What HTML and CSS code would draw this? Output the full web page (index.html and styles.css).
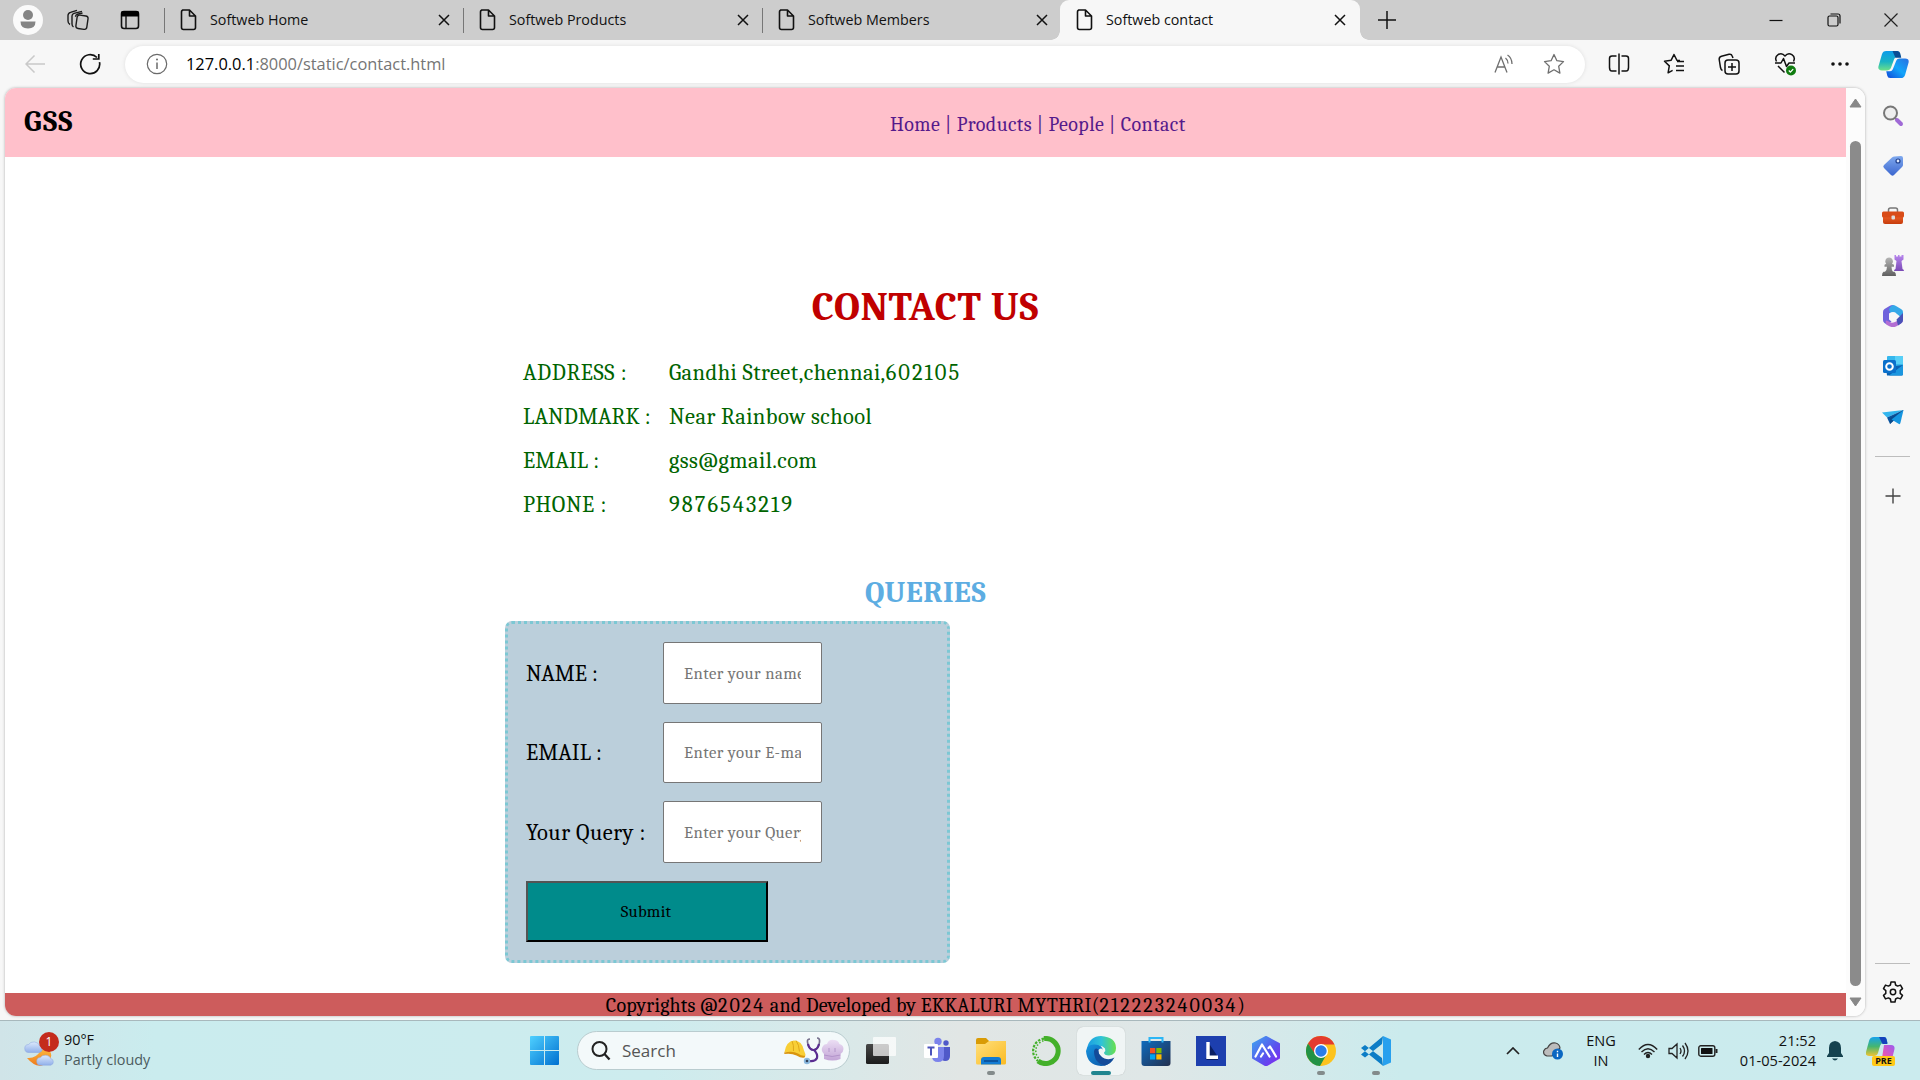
FILE: index.html
```html
<!DOCTYPE html>
<html lang="en">
<head>
<meta charset="utf-8">
<title>Softweb contact</title>
<link rel="stylesheet" href="styles.css">
</head>
<body>
<svg class="defs" width="0" height="0" aria-hidden="true">
  <defs>
    <linearGradient id="gBlue" x1="0" y1="0" x2="1" y2="1"><stop offset="0" stop-color="#4fd0ff"/><stop offset="1" stop-color="#0070d0"/></linearGradient>
    <linearGradient id="gTag" x1="0" y1="0" x2="0" y2="1"><stop offset="0" stop-color="#7fa9ee"/><stop offset="1" stop-color="#3b66cf"/></linearGradient>
    <linearGradient id="gOrange" x1="0" y1="0" x2="0" y2="1"><stop offset="0" stop-color="#f0642a"/><stop offset="1" stop-color="#c63c0c"/></linearGradient>
    <linearGradient id="gGrey" x1="0" y1="0" x2="0" y2="1"><stop offset="0" stop-color="#b5b5b5"/><stop offset="1" stop-color="#606060"/></linearGradient>
    <linearGradient id="gPurple" x1="0" y1="0" x2="0" y2="1"><stop offset="0" stop-color="#b886ee"/><stop offset="1" stop-color="#7a4ab5"/></linearGradient>
    <linearGradient id="gTeal" x1="0" y1="0" x2="0" y2="1"><stop offset="0" stop-color="#0c9bea"/><stop offset=".55" stop-color="#19b3c4"/><stop offset="1" stop-color="#6be089"/></linearGradient>
    <linearGradient id="gDeep" x1="1" y1="0" x2="0" y2="1"><stop offset="0" stop-color="#2a6fe0"/><stop offset=".5" stop-color="#12a5fa"/><stop offset="1" stop-color="#1048d8"/></linearGradient>
    <linearGradient id="gFolder" x1="0" y1="0" x2="1" y2="1"><stop offset="0" stop-color="#ffdf7c"/><stop offset="1" stop-color="#fbbb22"/></linearGradient>
    <linearGradient id="gEdge" x1="0" y1="0" x2="1" y2="0"><stop offset="0" stop-color="#1b9de2"/><stop offset=".5" stop-color="#2fc3d8"/><stop offset="1" stop-color="#68e04c"/></linearGradient>
    <linearGradient id="gEdgeB" x1="0" y1="0" x2="1" y2="1"><stop offset="0" stop-color="#1595e0"/><stop offset="1" stop-color="#0c4fa0"/></linearGradient>
    <linearGradient id="gStore" x1="0" y1="0" x2="1" y2="1"><stop offset="0" stop-color="#0f6bbd"/><stop offset="1" stop-color="#23304f"/></linearGradient>
    <linearGradient id="gHex" x1="0" y1="0" x2="1" y2="1"><stop offset="0" stop-color="#3fa4ef"/><stop offset=".6" stop-color="#5b50ee"/><stop offset="1" stop-color="#8426f0"/></linearGradient>
    <linearGradient id="gMoon" x1="0" y1="0" x2="0" y2="1"><stop offset="0" stop-color="#fbb43c"/><stop offset="1" stop-color="#ee7a1c"/></linearGradient>
    <linearGradient id="gCloud" x1="0" y1="0" x2="0" y2="1"><stop offset="0" stop-color="#dce9fc"/><stop offset="1" stop-color="#91b0ea"/></linearGradient>
    <linearGradient id="gRain" x1="0" y1="0" x2="0" y2="1"><stop offset="0" stop-color="#16a3ec"/><stop offset=".5" stop-color="#45b670"/><stop offset="1" stop-color="#f0c433"/></linearGradient>
    <linearGradient id="gRainB" x1="1" y1="0" x2="0" y2="1"><stop offset="0" stop-color="#9a5cf0"/><stop offset=".6" stop-color="#e556b5"/><stop offset="1" stop-color="#f58a4a"/></linearGradient>
    <linearGradient id="gChef" x1="0" y1="0" x2="0" y2="1"><stop offset="0" stop-color="#ecdff4"/><stop offset="1" stop-color="#c2a4d6"/></linearGradient>
    <linearGradient id="gDark" x1="0" y1="0" x2="0" y2="1"><stop offset="0" stop-color="#474747"/><stop offset="1" stop-color="#1c1c1c"/></linearGradient>
    <symbol id="doc" viewBox="0 0 18 22"><path d="M3.500 1h7L16.500 7v11.500q0 2-2 2h-10q-2 0-2-2V3q0-2 2-2zM10.500 1.200V7h6" fill="none" stroke="#111" stroke-width="1.600" stroke-linejoin="round"/></symbol>
    <symbol id="cross" viewBox="0 0 12 12"><path d="M1 1l10 10M11 1L1 11" stroke="#111" stroke-width="1.500" fill="none"/></symbol>
    <symbol id="cloud" viewBox="0 0 20 13"><path d="M5 12.500a4 4 0 0 1-.5-8A6 5 0 0 1 15.500 5.500a3.600 3.600 0 0 1 0 7z" fill="url(#gCloud)" stroke="#8aa5df" stroke-width=".5"/></symbol>
  </defs>
</svg>

<div class="screen">
  <header class="tabbar">
    <div class="tab-tools">
      <span class="profile"><svg width="18" height="20" viewBox="0 0 18 20"><circle cx="9" cy="5" r="5" fill="#858585"/><path d="M1.500 11.500h15q0 7-7.500 7t-7.500-7z" fill="#858585"/></svg></span>
      <svg class="workspaces" width="22" height="22" viewBox="0 0 22 22" fill="none" stroke="#1c1c1c" stroke-width="1.400"><rect x="9.500" y="6.500" width="11" height="13.500" rx="2.500" transform="rotate(8 15 13)"/><path d="M6.500 18q-1.500-1-1.500-3V7q0-2 2-2.600l8-2"/><path d="M3 15.500q-2-1-2-3.500V6.500Q1 4 3.500 3.300l6.500-2M15.500 4l-5 1.200q-2 .6-2 2.500"/></svg>
      <svg class="tabmenu" width="20" height="20" viewBox="0 0 20 20"><rect x="1.500" y="1.500" width="17" height="17" rx="2.500" fill="none" stroke="#111" stroke-width="1.600"/><path d="M1 6.500V3q0-2 2-2h14q2 0 2 2v3.500z" fill="#000"/><path d="M6 6v12" stroke="#111" stroke-width="1.400"/></svg>
    </div>
    <div class="tab"><svg width="18" height="22"><use href="#doc"/></svg><span>Softweb Home</span><svg class="x" width="12" height="12"><use href="#cross"/></svg></div>
    <div class="tab"><svg width="18" height="22"><use href="#doc"/></svg><span>Softweb Products</span><svg class="x" width="12" height="12"><use href="#cross"/></svg></div>
    <div class="tab"><svg width="18" height="22"><use href="#doc"/></svg><span>Softweb Members</span><svg class="x" width="12" height="12"><use href="#cross"/></svg></div>
    <div class="tab active"><svg width="18" height="22"><use href="#doc"/></svg><span>Softweb contact</span><svg class="x" width="12" height="12"><use href="#cross"/></svg></div>
    <svg class="newtab" width="18" height="18" viewBox="0 0 18 18"><path d="M9 0v18M0 9h18" stroke="#111" stroke-width="1.500"/></svg>
    <div class="winbtns">
      <svg width="14" height="14" viewBox="0 0 14 14"><path d="M.5 7.500h13" stroke="#111" stroke-width="1.200"/></svg>
      <svg width="14" height="14" viewBox="0 0 14 14" fill="none" stroke="#111" stroke-width="1.200"><rect x="1" y="3" width="10" height="10" rx="1.500"/><path d="M3.500 1H11q2 0 2 2v7.500"/></svg>
      <svg width="14" height="14" viewBox="0 0 14 14"><path d="M.5.5l13 13M13.500.5l-13 13" stroke="#222" stroke-width="1.200"/></svg>
    </div>
  </header>

  <div class="toolbar">
    <svg class="back" width="20" height="18" viewBox="0 0 20 18"><path d="M20 9H1M9.500.5L1 9l8.500 8.500" fill="none" stroke="#c9c9c9" stroke-width="1.500"/></svg>
    <svg class="reload" width="22" height="22" viewBox="0 0 22 22"><path d="M20.500 9.200A9.500 9.500 0 1 1 18 4.500M19.800 1v5h-6" fill="none" stroke="#111" stroke-width="1.700"/></svg>
    <div class="address">
      <svg class="info" width="22" height="22" viewBox="0 0 22 22"><circle cx="11" cy="11" r="9.700" fill="none" stroke="#6a6a6a" stroke-width="1.200"/><path d="M11 9.500v6.500" stroke="#6a6a6a" stroke-width="1.500"/><circle cx="11" cy="6.500" r="1" fill="#6a6a6a"/></svg>
      <span class="url"><b>127.0.0.1</b>:8000/static/contact.html</span>
      <svg class="aloud" width="20" height="20" viewBox="0 0 20 20" fill="none" stroke="#6f6f6f" stroke-width="1.300"><path d="M1 18.500L7 3l6 15.500M3 13h8M11.500 4q2.500 2 2.500 5.500M13.500 1q4.500 3 4.500 9"/></svg>
      <svg class="star" width="22" height="22" viewBox="0 0 22 22"><path d="M11 1.500l2.900 6.200 6.600.9-4.800 4.700 1.200 6.800-5.900-3.300-5.900 3.300 1.200-6.800L1.500 8.600l6.600-.9z" fill="none" stroke="#6f6f6f" stroke-width="1.300" stroke-linejoin="round"/></svg>
    </div>
    <div class="tools">
      <svg width="22" height="22" viewBox="0 0 22 22" fill="none" stroke="#111" stroke-width="1.500"><path d="M8.500 3H4Q1.500 3 1.500 5.500v9Q1.500 18 4 18h4.500M13.500 3H18q2.500 0 2.500 2.500v9q0 3.500-2.500 3.500h-4.500M11 .5v21"/></svg>
      <svg width="22" height="22" viewBox="0 0 22 22" fill="none" stroke="#111" stroke-width="1.500" stroke-linejoin="round"><path d="M17 7.500h-3L11 1.500 8.200 7.200l-6.700 1 4.800 4.700-1.200 6.900 4.500-2.400M14 8.500h7M13 13h8M13 17.500h8"/></svg>
      <svg width="22" height="22" viewBox="0 0 22 22" fill="none" stroke="#111" stroke-width="1.500"><rect x="7" y="7" width="14" height="14" rx="3"/><path d="M14 10v8M10 14h8M4.500 17.500q-1.500-.5-2-3L1.200 6.500Q1 4 3.500 3.300l7.500-2q2.500-.5 3.200 1.700l.8 2"/></svg>
      <svg width="22" height="24" viewBox="0 0 22 24" fill="none" stroke="#111" stroke-width="1.500" stroke-linejoin="round"><path d="M2.500 9.500C-.5 3.500 7-1 11 4c4-5 11.500-.5 8.500 5.500M1 11h6l2.500-4.500 3 8L15 11h6M4 14l6.500 6.500"/><circle cx="17" cy="18.500" r="5" fill="#107c10" stroke="none"/><path d="M14.800 18.500l1.600 1.600 2.800-3" stroke="#fff" stroke-width="1.300"/></svg>
      <svg width="22" height="22" viewBox="0 0 22 22" fill="#111"><circle cx="4" cy="11" r="1.800"/><circle cx="11" cy="11" r="1.800"/><circle cx="18" cy="11" r="1.800"/></svg>
    </div>
    <svg class="copilot" width="31" height="27" viewBox="0 0 32 32" preserveAspectRatio="none"><path d="M8.500 0h11q2.500 0 3 3l1 4h-4q-2 0-2.800 2.500l-3.500 11Q12.300 23 9.500 23H4q-4.500 0-3.500-5L4 4Q5 0 8.500 0z" fill="url(#gTeal)"/><path d="M15 0h5q2.500 0 3 3l1 5h-6z" fill="#0a4d94"/><path d="M23.500 32h-11q-2.500 0-3-3l-1-5h4q2 0 2.800-2.500l3.500-10q.8-2.500 3.600-2.500H28q4.500 0 3.500 5L28 28q-1 4-4.500 4z" fill="url(#gDeep)"/></svg>
  </div>

  <div class="middle">
    <div class="viewport">
      <div class="page">
        <div class="banner">
          <div class="brand">GSS</div>
          <nav><a>Home</a> | <a>Products</a> | <a>People</a> | <a>Contact</a></nav>
        </div>
        <main>
          <h1>CONTACT US</h1>
          <dl class="details">
            <dt class="loose">ADDRESS :</dt><dd>Gandhi Street,chennai,<span class="num">602105</span></dd>
            <dt>LANDMARK :</dt><dd>Near Rainbow school</dd>
            <dt>EMAIL :</dt><dd>gss@gmail.com</dd>
            <dt class="loose">PHONE :</dt><dd class="num">9876543219</dd>
          </dl>
          <h2>QUERIES</h2>
          <form class="query">
            <label>NAME :</label><input type="text" placeholder="Enter your name">
            <label>EMAIL :</label><input type="text" placeholder="Enter your E-mail">
            <label class="loose">Your Query :</label><input type="text" placeholder="Enter your Query">
            <button type="button">Submit</button>
          </form>
        </main>
        <footer>Copyrights @<span class="num">2024</span> and Developed by EKKALURI MYTHRI(<span class="num">212223240034</span>)</footer>
      </div>
      <div class="scroll">
        <svg width="13" height="10" viewBox="0 0 13 10"><path d="M6.500 1L12 9H1z" fill="#888" stroke="#888" stroke-linejoin="round"/></svg>
        <div class="thumb"></div>
        <svg width="13" height="10" viewBox="0 0 13 10"><path d="M6.500 9L12 1H1z" fill="#888" stroke="#888" stroke-linejoin="round"/></svg>
      </div>
    </div>
    <aside class="sidebar">
      <svg viewBox="0 0 22 22"><circle cx="8.500" cy="8" r="6.500" fill="#eee" stroke="#777" stroke-width="2"/><path d="M13 13l2 2" stroke="#777" stroke-width="2"/><path d="M15 15l4 4" stroke="#a06ad6" stroke-width="4" stroke-linecap="round"/></svg>
      <svg viewBox="0 0 22 22"><path d="M12.500 1.500L19 1q2 0 2 2v7q0 1-1 2l-8 8q-1.500 1.500-3 0L2 13q-1.500-1.500 0-3l8-7.500q1-1 2.500-1z" fill="url(#gTag)"/><circle cx="16" cy="6" r="2" fill="#dce8ff" stroke="#1f3f8c" stroke-width="1.200"/></svg>
      <svg viewBox="0 0 22 22"><path d="M6.500 7V5q0-2 2-2h5q2 0 2 2v2" fill="none" stroke="#777" stroke-width="1.500"/><rect x="1" y="10" width="20" height="9" rx="2" fill="url(#gOrange)"/><rect x="0" y="6.500" width="22" height="6" rx="1.500" fill="#d94c18"/><rect x="9.500" y="10.500" width="3.500" height="4" rx="1" fill="#ddd"/></svg>
      <svg viewBox="0 0 22 22"><path d="M12.500 0v4.500l2 1.500-1 8q-1.500.5-1.500 2h10q0-1.500-1.500-2l-1-8 2-1.500V0h-2v1.500h-2V0h-1.500v1.500h-2V0z" fill="url(#gPurple)"/><path d="M7 2.500a3.800 3.800 0 0 1 3 6.300l2 1v2H9.500q0 3 1.500 5h1.500q1.500 1 1.500 4.200H0q0-3.200 1.500-4.200h1.500Q5 15 5 11.800H2.500v-2l1.700-1A3.800 3.800 0 0 1 7 2.500z" fill="url(#gGrey)"/></svg>
      <svg viewBox="0 0 22 22"><path d="M11 0Q9 0 7.500 1L2.500 4Q1 5 1 7v8q0 2 1.500 3l3 2 4-3.500-2.500-2V8.500L15 5z" fill="#6f62dc"/><path d="M11 0q1.500 0 3 1l5 3q2 1 2 3v7L15 9 8 7.500 7 4q2-3.500 4-4z" fill="#35a8e8"/><path d="M5 20l3 1.500q3 1 6 0l5-3q2-1 2-3.500v-2l-8 4q-4 2-7-1L4 15.500Q3 18 5 20z" fill="#b36ed3"/><path d="M21 8v7q0 2.500-2 3.500l-3 2-1.500-6z" fill="#4a52b8"/><circle cx="11" cy="11" r="4" fill="#f7f7f7"/></svg>
      <svg viewBox="0 0 22 22"><rect x="5" y="1" width="16" height="10" rx="1" fill="#35b7ed"/><rect x="13" y="1" width="8" height="8" fill="#57cff7"/><path d="M4 12l17-2v9q0 1.500-1.500 1.500H5z" fill="#0a62b3"/><path d="M21 10v9q0 1.500-1.500 1.500H7z" fill="#1b96df"/><rect x="1" y="5" width="13" height="13" rx="1.500" fill="#0a70cb"/><circle cx="7.500" cy="11.500" r="3.300" fill="none" stroke="#fff" stroke-width="2"/></svg>
      <svg viewBox="0 0 22 22"><path d="M21.500 4L0 6.500l5 5z" fill="#32b5ee"/><path d="M21.500 4L5 11.500 8 18z" fill="#0b549f"/><path d="M21.500 4L8 12v6l4-3.500z" fill="#0a4a8d"/><path d="M21.500 4L9.500 13.500 17 18q1 .5 1.400-1z" fill="#1595e0"/></svg>
      <hr>
      <svg class="add" viewBox="0 0 22 22"><path d="M11 3.500v15M3.500 11h15" stroke="#444" stroke-width="1.400"/></svg>
      <hr class="low">
      <svg class="gear" viewBox="0 0 22 22"><path d="M9 1h4l.6 3 2 1.100 2.900-1 2 3.500-2.300 2v2.800l2.300 2-2 3.500-2.900-1-2 1.100L13 21H9l-.6-3-2-1.100-2.900 1-2-3.500 2.300-2V9.600l-2.300-2 2-3.500 2.900 1 2-1.100z" fill="none" stroke="#111" stroke-width="1.500" stroke-linejoin="round"/><circle cx="11" cy="11" r="2.700" fill="none" stroke="#111" stroke-width="1.500"/></svg>
    </aside>
  </div>

  <footer class="taskbar">
    <div class="weather">
      <div class="wicon">
        <svg width="32" height="36" viewBox="0 0 32 36"><path d="M3 25q9 1 14-8h8q5 6-1 12-10 9-21-4z" fill="url(#gMoon)"/><use href="#cloud" x="0" y="7" width="20" height="13"/><use href="#cloud" x="12" y="20" width="19" height="13"/></svg>
        <span class="badge">1</span>
      </div>
      <div class="wtext"><div>90°F</div><div class="dim">Partly cloudy</div></div>
    </div>
    <svg class="start" width="29" height="29" viewBox="0 0 29 29" fill="url(#gBlue)"><path d="M0 1q0-1 1-1h13v14H0zM15 0h13q1 0 1 1v13H15zM0 15h14v14H1q-1 0-1-1zM15 15h14v13q0 1-1 1H15z"/></svg>
    <div class="search">
      <svg width="20" height="20" viewBox="0 0 20 20"><circle cx="8.500" cy="8" r="7" fill="none" stroke="#222" stroke-width="2"/><path d="M13.500 13l5 5.500" stroke="#222" stroke-width="2.300"/></svg>
      <span>Search</span>
      <svg class="art" width="60" height="28" viewBox="0 0 60 28"><path d="M.5 15Q2 4.500 10 3.500q8 0 10 10l1.500 4-1 2.500L10 17z" fill="#f8cf36"/><path d="M8 4q2 4 1.500 10M12 3.500q3 4 3.500 11" fill="none" stroke="#e0a818"/><path d="M0 15.500q9-2 14 1 4 3 7.500 2l-1 2q-3 1-8-2-5-2.500-12-1.500z" fill="#d9950e"/><path d="M26 2q-3 0-2.500 3Q24 12 29.500 13 35 12 35.500 5q.5-4-2.500-4" fill="none" stroke="#77718e" stroke-width="1.700"/><path d="M24 7q1.500 6 5.500 6T35 7M30 13q4 4 3 8-2 4-8 3" fill="none" stroke="#5a2d91" stroke-width="2.200"/><circle cx="23" cy="24" r="3.200" fill="#8bb9df"/><circle cx="23" cy="24" r="1.300" fill="#33435a"/><path d="M40 22v-5q-4-4-1-8 1-2 4-2 2-5 7-4 4 0 5.500 4 4 1 4 5 0 3-3 5v5q-8 3-16.500 0z" fill="url(#gChef)"/><path d="M40 18q8 3 16.500 0M45 11v4M51 11v4" fill="none" stroke="#ab8cc4" stroke-width=".8"/></svg>
    </div>
    <div class="apps">
      <span class="app"><svg viewBox="0 0 30 30"><rect x="0" y="8" width="23" height="20" rx="1.500" fill="url(#gDark)"/><rect x="7" y="1" width="23" height="19" rx="1" fill="#fff" opacity=".72"/></svg></span>
      <span class="app"><svg viewBox="0 0 30 30"><circle cx="17" cy="5.500" r="3.700" fill="#7b83eb"/><circle cx="25" cy="7" r="2.700" fill="#5059c9"/><path d="M20 11h9v9q0 5-5 5-3 0-4-3z" fill="#5059c9"/><path d="M12 11h11v9q0 6-6 6t-6-6z" fill="#7b83eb"/><rect x="3" y="8" width="14" height="14" rx="1" fill="#fff"/><path d="M6.500 11.500h7M10 11.500v8" stroke="#4b53bc" stroke-width="2"/></svg></span>
      <span class="app run"><svg viewBox="0 0 30 30"><path d="M0 4q0-2 2-2h8l3 3v6H0z" fill="#d99b05"/><path d="M0 8h9l4-3h17v22q0 1.500-1.500 1.500h-27Q0 28.500 0 27z" fill="url(#gFolder)"/><path d="M5 28.500V24q0-3 3-3h14q3 0 3 3v4.500z" fill="#127bd2"/><path d="M8 25h14" stroke="#0a4b92" stroke-width="1.600"/></svg></span>
      <span class="app"><svg viewBox="0 0 30 30"><path d="M13 2.600a12.500 12.500 0 1 1-6 22.300" fill="none" stroke="#43b02a" stroke-width="5"/><path d="M13 2.600A12.500 12.500 0 0 0 7 24.900" fill="none" stroke="#43b02a" stroke-width="2.200" stroke-dasharray="2.500 1.400"/><path d="M12.500 4.800A10.500 10.500 0 0 0 8 22.500" fill="none" stroke="#43b02a" stroke-width="1.500" stroke-dasharray="1.500 1.800"/></svg></span>
      <span class="app cur"><svg viewBox="0 0 30 30"><path d="M1 12Q4 0 15 0q15 1 15 12 0 7-7 7.500-5 0-5-3 2-2 1-4-4-5-11-1z" fill="url(#gEdge)"/><path d="M0 15Q1 8 9 8.500q7 0 8 6-5-2-5 3 1 8 10 8l5-1.500Q22 30 15 30 1 29 0 15z" fill="url(#gEdgeB)"/><path d="M8 15q0 12 11 14.500 6-2 9.500-8-5 3-10 1-6-3-5-8-4-4-5.500.5z" fill="#134b99"/><path d="M12.500 14q3-3 5 .5-1.500 4 2 6-5 0-6.500-3z" fill="#eef5f5"/></svg></span>
      <span class="app"><svg viewBox="0 0 30 30"><path d="M.5 5h29v22q0 3-3 3h-23q-3 0-3-3z" fill="url(#gStore)"/><rect x="9" y="12" width="5.200" height="5.200" fill="#f25022"/><rect x="15.300" y="12" width="5.200" height="5.200" fill="#7fba00"/><rect x="9" y="18.300" width="5.200" height="5.200" fill="#00a4ef"/><rect x="15.300" y="18.300" width="5.200" height="5.200" fill="#ffb900"/><path d="M8.500 6.500V2h13v4.500" fill="none" stroke="#2bb6f5" stroke-width="2"/></svg></span>
      <span class="app"><svg viewBox="0 0 30 30"><rect width="30" height="30" fill="#1d3fae"/><path d="M12 6v16H9l2 2h11v-3" fill="#0a1f63"/><path d="M12 6v15.300h10" stroke="#fff" stroke-width="3.400" fill="none"/></svg></span>
      <span class="app"><svg viewBox="0 0 30 30"><path d="M15 1l13 7v14l-13 7.500L2 22V8z" fill="url(#gHex)" stroke="url(#gHex)" stroke-width="2" stroke-linejoin="round"/><path d="M4.500 20.500l6.500-12 7.500 12M10 20.500l2-3M17.500 12l1.500-1.500 2.500 4M21.500 14.500l3.500 6" fill="none" stroke="#fff" stroke-width="2.200" stroke-linecap="round" stroke-linejoin="round"/></svg></span>
      <span class="app run"><svg viewBox="0 0 30 30"><circle cx="15" cy="15" r="15" fill="#fcc31e"/><path d="M2 7.500A15 15 0 0 1 28.500 8.500H15L8.700 18z" fill="#e33b2e"/><path d="M2 7.500A15 15 0 0 0 14 30l6.500-11.500h-11z" fill="#229245"/><circle cx="15" cy="15" r="7" fill="#fff"/><circle cx="15" cy="15" r="5.700" fill="#2b7de9"/></svg></span>
      <span class="app run"><svg viewBox="0 0 30 30"><path d="M22 0l-1 8L4 21.500 0 18.500 21 1zM22 30l-1-8L4 9 0 12l21 17z" fill="#0c7dc6"/><path d="M22 0l8 3.500v23L22 30z" fill="#27a0ee"/></svg></span>
    </div>
    <div class="tray">
      <svg class="chev" width="14" height="8" viewBox="0 0 14 8"><path d="M1 7l6-6 6 6" fill="none" stroke="#222" stroke-width="1.700"/></svg>
      <svg class="drive" width="20" height="18" viewBox="0 0 20 18"><path d="M4 14Q0 13 .7 9 2 6 4.500 6q3-6 8-5 4 1 4.500 5l-8 8z" fill="#bcbcbc" stroke="#444" stroke-width="1.200"/><circle cx="14.500" cy="12" r="5.500" fill="#0a67c2"/><path d="M14.500 11.500v3.500M14.500 8.800v1.400" stroke="#fff" stroke-width="1.400"/></svg>
      <div class="lang">ENG<br>IN</div>
      <svg class="wifi" width="20" height="16" viewBox="0 0 20 16" fill="none" stroke="#222" stroke-width="1.400"><path d="M.8 6.500Q10-3.500 19.200 6.500M3.500 9Q10 2.500 16.500 9M6 11.500q4-4 8 0"/><circle cx="10" cy="13" r="1.500" fill="#222"/></svg>
      <svg class="vol" width="21" height="18" viewBox="0 0 21 18" fill="none" stroke="#222" stroke-width="1.300"><path d="M1 6.500h3l5-4.500v14l-5-4.500H1zM12 6q2 3 0 6M14.500 3.500q4 5.500 0 11M17 1q6 8 0 16"/></svg>
      <svg class="bat" width="20" height="12" viewBox="0 0 20 12"><rect x=".8" y=".8" width="16" height="10.400" rx="2" fill="none" stroke="#222" stroke-width="1.400"/><rect x="3" y="3" width="11.500" height="6" rx=".5" fill="#111"/><path d="M18.500 4v4" stroke="#222" stroke-width="2"/></svg>
      <div class="clock">21:52<br>01-05-2024</div>
      <svg class="bell" width="16" height="20" viewBox="0 0 16 20"><path d="M8 0q6 .5 6 7v5l2 3v1H0v-1l2-3V7q0-6.500 6-7zM5 17.500h6q-3 4-6 0z" fill="#15424f"/></svg>
      <div class="pre"><svg width="29" height="28" viewBox="0 0 29 28"><path d="M8 0h10q2 0 2.500 2l1 4h-4Q15 6 14 9l-2 7q-1 3-4 3H3q-4 0-3-4L3 4q1-4 5-4z" fill="url(#gRain)"/><path d="M13 0h5q2 0 2.500 2l1 5h-5z" fill="#1442bb"/><path d="M18 8h7q4 0 3.500 4L26 22q-1 4-5 4h-8q2-1 3-5z" fill="url(#gRainB)"/></svg><span>PRE</span></div>
    </div>
  </footer>
</div>
</body>
</html>
```

FILE: styles.css
```css
* { box-sizing: border-box; }
body { margin: 0; background: #f7f7f7; overflow: hidden; }
svg { display: block; flex: none; }
.defs { position: absolute; }
.screen { width: 1920px; height: 1080px; display: flex; flex-direction: column; font-family: "Open Sans", "Noto Sans", sans-serif; color: #111; }

.tabbar { height: 40px; display: flex; align-items: center; background: #cdcdcd; flex: none; }
.tab-tools { width: 164px; height: 40px; display: flex; align-items: center; padding-left: 13px; }
.profile { width: 30px; height: 30px; border-radius: 50%; background: #fafafa; display: flex; align-items: center; justify-content: center; }
.workspaces { margin-left: 24px; }
.tabmenu { margin-left: 31px; }
.tab { width: 299px; height: 40px; display: flex; align-items: center; padding-left: 15px; padding-right: 13px; position: relative; font-size: 14.300px; line-height: 20px; white-space: nowrap; }
.tab::before { content: ""; position: absolute; left: 0; top: 8px; width: 1px; height: 25px; background: #777; }
.tab span { margin-left: 13px; }
.tab .x { margin-left: auto; }
.tab.active { background: #f7f7f7; border-radius: 9px 9px 0 0; width: 300px; padding-right: 14px; margin-left: -1px; }
.tab.active::before { left: -9px; top: 31px; width: 9px; height: 9px; background: radial-gradient(circle at 0 0, #cdcdcd 8.500px, #f7f7f7 9px); }
.tab.active::after { content: ""; position: absolute; right: -9px; top: 31px; width: 9px; height: 9px; background: radial-gradient(circle at 100% 0, #cdcdcd 8.500px, #f7f7f7 9px); }
.newtab { margin-left: 18px; }
.winbtns { margin-left: auto; display: flex; gap: 43.500px; padding-right: 22px; }

.toolbar { height: 48px; display: flex; align-items: center; flex: none; background: #f7f7f7; }
.back { margin-left: 25px; }
.reload { margin-left: 34px; }
.address { margin: 0 0 0 24px; width: 1460px; height: 37px; border-radius: 19px; background: #fff; box-shadow: 0 0 4px rgba(0,0,0,.1); display: flex; align-items: center; padding-left: 21px; }
.url { margin-left: 18px; font-size: 16.400px; line-height: 24px; color: #757575; white-space: nowrap; }
.url b { font-weight: 400; color: #000; }
.aloud { margin-left: auto; }
.star { margin-left: 29px; margin-right: 20px; }
.tools { display: flex; align-items: center; gap: 33.200px; margin-left: 23px; }
.copilot { margin-left: 27px; }

.middle { height: 932px; display: flex; flex: none; padding-left: 5px; background: #f7f7f7; }
.viewport { width: 1860px; height: 928px; border-radius: 11px; overflow: hidden; display: flex; background: #fff; box-shadow: 0 0 3px rgba(0,0,0,.3); }
.page { width: 1841px; display: flex; flex-direction: column; font-family: Cambria, Caladea, "Liberation Serif", serif; }
.banner { height: 69px; background: #ffc0cb; display: flex; }
.brand { width: 885px; padding: 15px 0 0 19px; font-size: 30px; line-height: 37px; letter-spacing: 1.300px; font-weight: 700; color: #000; }
nav { padding-top: 24px; font-size: 20px; line-height: 26px; letter-spacing: .420px; color: #551a8b; white-space: pre; }
main { height: 836px; display: flex; flex-direction: column; padding-top: 126px; }
h1, h2 { margin: 0; text-align: center; }
h1 { font-size: 40px; line-height: 48px; letter-spacing: .700px; color: #c00000; }
.details { margin: 20px 0 0 518px; display: grid; grid-template-columns: 146px auto; grid-auto-rows: 44px; line-height: 44px; font-size: 22.500px; letter-spacing: .120px; color: #006400; white-space: nowrap; }
.details dd { margin: 0; letter-spacing: .430px; }
.details .loose { letter-spacing: .600px; }
.details .num { letter-spacing: 2.050px; }
h2 { margin-top: 48px; font-size: 30px; line-height: 36px; letter-spacing: .500px; color: #5dade2; }
.query { margin: 10px 0 0 500px; width: 445px; height: 342px; border: 3px dotted #7cc8d4; border-radius: 7px; background: #bbcfdb; padding: 18px; display: grid; grid-template-columns: 137px 1fr; grid-template-rows: repeat(4, 61.500px); row-gap: 18px; align-items: center; font-size: 22.500px; color: #000; }
.query label { padding-top: 2px; letter-spacing: .080px; }
.query .loose { letter-spacing: .500px; }
.query input { width: 159px; height: 61.500px; padding: 1px 20px 0; border: 1px solid #767676; border-radius: 2px; font-family: inherit; font-size: 16.670px; letter-spacing: .450px; background: #fff; }
.query input::placeholder { color: #757575; }
.query button { grid-column: 1 / 3; width: 242px; height: 61px; background: #008b8b; border: 2px outset #000; font-family: inherit; font-size: 16.670px; letter-spacing: .300px; color: #000; padding: 0 2px 0 0; }
.page footer { height: 23px; background: #cd5c5c; text-align: center; font-size: 20px; line-height: 26px; letter-spacing: .200px; color: #000; white-space: nowrap; }
.page footer .num { letter-spacing: 2.050px; }
.scroll { width: 19px; background: #fcfcfc; display: flex; flex-direction: column; align-items: center; padding-top: 10px; }
.thumb { width: 11px; height: 845px; margin: 33px 0 11px; border-radius: 6px; background: #8b8b8b; }

.sidebar { width: 55px; display: flex; flex-direction: column; align-items: center; padding-top: 17px; gap: 28.100px; }
.sidebar svg { width: 22px; height: 22px; }
.sidebar hr { width: 35px; height: 1px; border: 0; background: #bdbdbd; margin: 0; }
.sidebar .add { margin-top: 0; }
.sidebar .low { margin-top: 428px; }
.sidebar .gear { margin-top: -11px; }

.taskbar { height: 60px; border-top: 1px solid #a8b8bc; display: flex; align-items: center; flex: none; background: linear-gradient(90deg, #d0e4e8 0, #caecee 8%, #cdecee 34%, #e1e6e5 50%, #dfe7e7 60%, #cbebed 73%, #cbebee 100%); }
.weather { width: 530px; display: flex; align-items: center; padding-left: 24px; }
.wicon { position: relative; width: 40px; }
.badge { position: absolute; left: 15px; top: -1px; width: 20px; height: 20px; border-radius: 50%; background: #c42b1c; color: #fff; font-size: 12px; line-height: 20px; text-align: center; }
.wtext { font-size: 14.400px; line-height: 20px; padding-bottom: 2px; }
.dim { color: #4c5c5f; }
.search { margin-left: 18px; width: 273px; height: 39px; border: 1px solid #b9cccf; border-radius: 20px; background: #f3f9fa; display: flex; align-items: center; padding-left: 13px; font-size: 17px; line-height: 24px; color: #555; }
.search span { margin-left: 11px; }
.art { margin-left: auto; margin-right: 5px; }
.apps { display: flex; margin-left: 7px; gap: 7px; }
.app { width: 48px; height: 48px; border-radius: 6px; position: relative; display: flex; align-items: center; justify-content: center; }
.app svg { width: 30px; height: 30px; }
.cur { background: #f0f5f5; box-shadow: 0 0 1px rgba(0,0,0,.25); }
.run::after, .cur::after { content: ""; position: absolute; bottom: 0; left: 20px; width: 8px; height: 4px; border-radius: 2px; background: #838b8b; }
.cur::after { left: 14px; width: 20px; background: #20858f; }
.tray { margin-left: auto; display: flex; align-items: center; padding-right: 25px; }
.drive { margin-left: 23px; }
.lang { width: 40px; margin-left: 18px; text-align: center; font-size: 14.500px; line-height: 20px; }
.wifi { margin-left: 17px; }
.vol { margin-left: 10px; }
.bat { margin-left: 9px; }
.clock { width: 98px; text-align: right; font-size: 14.600px; line-height: 20px; padding-bottom: 2px; white-space: nowrap; }
.bell { margin-left: 11px; }
.pre { margin-left: 23px; position: relative; width: 29px; height: 28px; }
.pre span { position: absolute; left: 6px; top: 19px; width: 23px; height: 10px; border-radius: 2px; background: #ffc917; font: 700 9px/10px "Open Sans", sans-serif; text-align: center; }
```
